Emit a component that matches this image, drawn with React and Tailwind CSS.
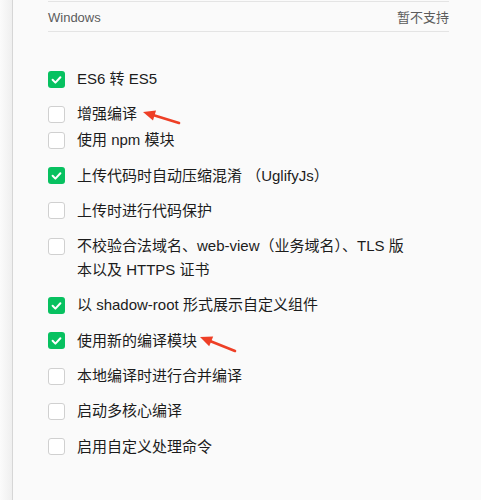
import React from "react";

const items = [
    { label: "ES6 转 ES5", checked: true },
    { label: "增强编译", checked: false, group: "a" },
    { label: "使用 npm 模块", checked: false, group: "a" },
    { label: "上传代码时自动压缩混淆 （UglifyJs）", checked: true },
    { label: "上传时进行代码保护", checked: false },
    {
        label: (
            <>
                不校验合法域名、web-view（业务域名）、TLS 版
                <br />
                本以及 HTTPS 证书
            </>
        ),
        checked: false,
    },
    { label: "以 shadow-root 形式展示自定义组件", checked: true },
    { label: "使用新的编译模块", checked: true },
    { label: "本地编译时进行合并编译", checked: false },
    { label: "启动多核心编译", checked: false },
    { label: "启用自定义处理命令", checked: false },
];

function Checkbox({ checked }) {
    if (checked) {
        return (
            <div className="w-[17px] h-[17px] mt-[3.5px] shrink-0 rounded-[3px] bg-[#07c160] flex items-center justify-center">
                <svg width="13" height="13" viewBox="0 0 13 13" fill="none">
                    <path
                        d="M2.6 6.8l2.8 2.8 5-5.4"
                        stroke="#fff"
                        strokeWidth="2"
                        strokeLinecap="round"
                        strokeLinejoin="round"
                    />
                </svg>
            </div>
        );
    }
    return (
        <div className="w-[17px] h-[17px] mt-[3.5px] shrink-0 rounded-[3px] bg-white border border-[#d0d0d0]" />
    );
}

function Row({ item }) {
    return (
        <div className="flex items-start gap-3">
            <Checkbox checked={item.checked} />
            <div className="text-[15px] leading-[24px] text-[#1c1c1c]">
                {item.label}
            </div>
        </div>
    );
}

export default function App() {
    const first = items[0];
    const grouped = items.filter((i) => i.group === "a");
    const rest = items.slice(3);

    return (
        <div
            className="relative w-[481px] h-[500px] flex bg-[#fafafa] overflow-hidden"
            style={{ fontFamily: '"Liberation Sans", "Noto Sans CJK SC", sans-serif' }}
        >
            {/* 左侧阴影条 */}
            <div className="w-[13px] h-full bg-gradient-to-r from-[#fbfbfb] to-[#efefef] border-r border-[#d6d6d6]" />

            <div className="flex-1 pl-[35px] pr-[32px] pt-px">
                <div className="border-t border-b border-[#e4e4e4] h-[31px] pt-[2px] flex items-center justify-between text-[13px] text-[#5c5c5c]">
                    <span>Windows</span>
                    <span>暂不支持</span>
                </div>

                <div className="mt-[35px] flex flex-col gap-[11.3px]">
                    <Row item={first} />
                    <div className="flex flex-col gap-[2px]">
                        {grouped.map((it, i) => (
                            <Row key={i} item={it} />
                        ))}
                    </div>
                    {rest.map((it, i) => (
                        <Row key={i} item={it} />
                    ))}
                </div>
            </div>

            {/* 标注箭头 */}
            <svg
                className="absolute inset-0 pointer-events-none"
                width="481"
                height="500"
                viewBox="0 0 481 500"
            >
                <line x1="179" y1="123" x2="153" y2="115" stroke="#ee3f26" strokeWidth="2.6" strokeLinecap="round" />
                <polygon points="143,112 156,110.5 153,120.5" fill="#ee3f26" />
                <line x1="235" y1="351" x2="210" y2="341" stroke="#ee3f26" strokeWidth="2.6" strokeLinecap="round" />
                <polygon points="200,337 213.2,336.6 209.2,346.3" fill="#ee3f26" />
            </svg>
        </div>
    );
}
